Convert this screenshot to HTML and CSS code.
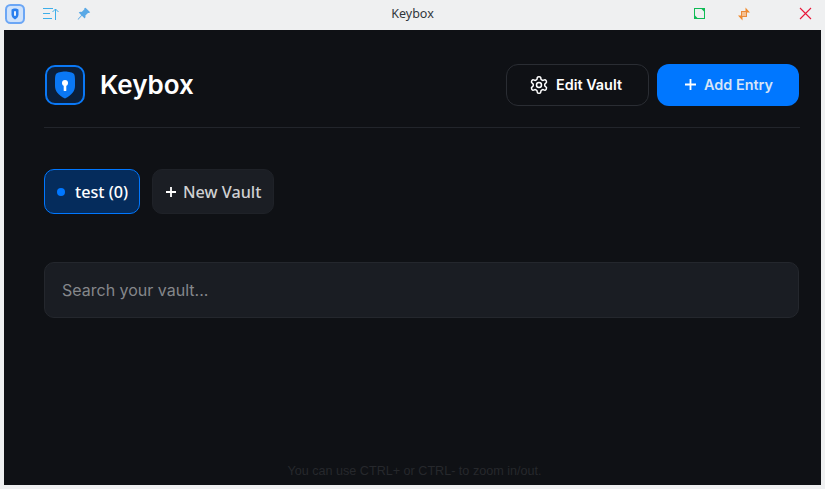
FILE: index.html
```html
<!DOCTYPE html>
<html lang="en">
<head>
  <meta charset="UTF-8">
  <title>Keybox</title>
  <link rel="stylesheet" href="styles.css">
</head>
<body>

  <!-- window title bar -->
  <div class="titlebar">
    <div class="tb-left">
      <svg class="tb-logo" width="20" height="20" viewBox="0 0 20 20">
        <rect x="1" y="1" width="18" height="18" rx="4.5" fill="#cfe2fb" stroke="#6ba6f5" stroke-width="2"/>
        <path d="M10 4.500c1.500 0 3.500.5 3.500 1.500v4.200c0 2.600-1.500 4.200-3.500 5.300-2-1.100-3.500-2.700-3.500-5.300V6c0-1 2-1.500 3.500-1.500z" fill="#2a7fee"/>
        <rect x="9" y="7" width="2" height="5" rx="1" fill="#e8f1fd"/>
      </svg>
      <svg class="tb-sort" width="16" height="14" viewBox="0 0 16 14" fill="none" stroke="#3daee9" stroke-width="1">
        <path d="M0 1.500h10M0 6.500h7M0 11.500h9M12.500 13V2M9.500 5l3-3 3 3"/>
      </svg>
      <svg class="tb-pin" width="14" height="14" viewBox="0 0 14 14">
        <path d="M8.500 0.800l4.700 4.500-1.200.8-1-.2-2.600 2.700c.3 1.200 0 2.200-.7 2.900L4.900 8.800 1.200 12.800.6 12.200l3.700-4-2.600-2.600c.8-.7 1.800-1 3-.7l2.700-2.600-.1-1z" fill="#5aa9e6"/>
      </svg>
    </div>
    <div class="tb-title">Keybox</div>
    <div class="tb-right">
      <svg class="tb-max" width="12" height="12" viewBox="0 0 12 12">
        <rect x="0.500" y="0.500" width="10" height="10" fill="none" stroke="#0fbb55" stroke-width="1"/>
        <path d="M1 10V7.500L3.500 10zM10 1v2.500L7.500 1z" fill="#0fbb55"/>
      </svg>
      <svg class="tb-min" width="14" height="14" viewBox="0 0 14 14">
        <path d="M8.500 0.500l4.500 5h-4.500zM5.500 13.500l-4.500-5h4.500z" fill="#f08a2c"/>
        <rect x="4.500" y="4.500" width="5" height="5" fill="#f6c08f" stroke="#e88a3c" stroke-width="1"/>
      </svg>
      <svg width="13" height="13" viewBox="0 0 13 13" stroke="#e8173a" stroke-width="1.100" fill="none">
        <path d="M1 1l11 11M12 1L1 12"/>
      </svg>
    </div>
  </div>

  <div class="app">
    <header class="top">
      <div class="brand">
        <div class="logo">
          <svg width="20" height="28" viewBox="0 0 20 28">
            <path d="M10 0.500c3.500 0 8 1 9 2.500.7 1 1 3 1 6v6c0 5-3 9-10 12.500C3 24 0 20 0 15V9c0-3 .3-5 1-6 1-1.500 5.500-2.500 9-2.500z" fill="#0a78f5"/>
            <circle cx="10" cy="12" r="3" fill="#fff"/>
            <rect x="8.700" y="12" width="2.600" height="8" rx="0.600" fill="#fff"/>
          </svg>
        </div>
        <h1>Keybox</h1>
      </div>
      <div class="actions">
        <button class="btn btn-dark">
          <svg width="20" height="20" viewBox="0 0 24 24" fill="none" stroke="#fff" stroke-width="1.800" stroke-linecap="round" stroke-linejoin="round">
            <circle cx="12" cy="12" r="3"/>
            <path d="M12.220 2h-.440a2 2 0 0 0-2 2v.180a2 2 0 0 1-1 1.730l-.430.250a2 2 0 0 1-2 0l-.150-.080a2 2 0 0 0-2.730.730l-.220.380a2 2 0 0 0 .730 2.730l.150.100a2 2 0 0 1 1 1.720v.510a2 2 0 0 1-1 1.740l-.150.090a2 2 0 0 0-.730 2.730l.220.380a2 2 0 0 0 2.730.730l.150-.080a2 2 0 0 1 2 0l.430.250a2 2 0 0 1 1 1.730V20a2 2 0 0 0 2 2h.440a2 2 0 0 0 2-2v-.180a2 2 0 0 1 1-1.730l.430-.250a2 2 0 0 1 2 0l.150.080a2 2 0 0 0 2.730-.730l.220-.390a2 2 0 0 0-.730-2.730l-.150-.080a2 2 0 0 1-1-1.740v-.500a2 2 0 0 1 1-1.740l.150-.090a2 2 0 0 0 .730-2.730l-.220-.380a2 2 0 0 0-2.730-.730l-.150.080a2 2 0 0 1-2 0l-.430-.250a2 2 0 0 1-1-1.730V4a2 2 0 0 0-2-2z"/>
          </svg>
          Edit Vault
        </button>
        <button class="btn btn-blue">
          <svg width="11" height="11" viewBox="0 0 11 11" stroke="#fff" stroke-width="1.800">
            <path d="M5.500 0v11M0 5.500h11"/>
          </svg>
          <span class="btn-blue-text">Add Entry</span>
        </button>
      </div>
    </header>

    <div class="vaults">
      <button class="pill pill-active"><span class="dot"></span>test (0)</button>
      <button class="pill pill-new">
        <svg width="10" height="10" viewBox="0 0 10 10" stroke="#fff" stroke-width="1.800">
          <path d="M5 0v10M0 5h10"/>
        </svg>
        <span class="pill-new-text">New Vault</span>
      </button>
    </div>

    <input class="search" type="text" placeholder="Search your vault...">

    <p class="hint">You can use CTRL+ or CTRL- to zoom in/out.</p>
  </div>

</body>
</html>
```

FILE: styles.css
```css
* {
  box-sizing: border-box;
}

body {
  margin: 0;
  height: 489px;
  overflow: hidden;
  background: #eff0f1;
  font-family: Inter, sans-serif;
}

.titlebar {
  display: grid;
  grid-template-columns: 1fr auto 1fr;
  align-items: center;
  height: 30px;
  padding-bottom: 3px;
}

.tb-left {
  display: flex;
  align-items: center;
  padding-left: 5px;
}

.tb-sort {
  margin-left: 18px;
}

.tb-pin {
  margin-left: 18px;
}

.tb-title {
  font-family: "Noto Sans", sans-serif;
  font-size: 12.5px;
  color: #31363b;
}

.tb-right {
  display: flex;
  justify-content: flex-end;
  align-items: center;
  padding-right: 13px;
}

.tb-max {
  margin-right: 31px;
}

.tb-min {
  margin-right: 48px;
}

.app {
  display: flex;
  flex-direction: column;
  height: 455px;
  margin: 0 4px;
  padding: 34px 21px 0 40px;
  background: #0f1115;
}

.top {
  display: flex;
  justify-content: space-between;
  align-items: center;
  height: 64px;
  padding-bottom: 22px;
  border-bottom: 1px solid #22252b;
}

.brand {
  display: flex;
  align-items: center;
  gap: 15px;
  padding-left: 1px;
}

.logo {
  display: flex;
  align-items: center;
  justify-content: center;
  width: 40px;
  height: 40px;
  border: 2px solid #0a78f5;
  border-radius: 10px;
  background: #0b1f3a;
}

h1 {
  margin: 0;
  font-size: 26px;
  font-weight: 600;
  color: #fff;
}

.actions {
  display: flex;
  gap: 8px;
  padding-right: 1px;
}

.btn {
  display: flex;
  align-items: center;
  justify-content: center;
  height: 42px;
  border-radius: 12px;
  font-family: Inter, sans-serif;
  font-size: 14.4px;
  font-weight: 600;
  color: #fff;
}

.btn-dark {
  width: 143px;
  gap: 7px;
  padding: 0 4px 0 0;
  border: 1px solid #2a2d33;
  background: #0f1115;
}

.btn-blue {
  width: 142px;
  gap: 8px;
  padding: 0 0 0 2px;
  border: none;
  background: #0077ff;
}

.btn-blue-text {
  color: #d6e4f7;
}

.vaults {
  display: flex;
  gap: 12px;
  margin-top: 41px;
}

.pill {
  display: flex;
  align-items: center;
  height: 45px;
  border-radius: 10px;
  font-family: "Noto Sans", sans-serif;
  font-size: 16.2px;
  font-weight: 500;
}

.pill-active {
  width: 96px;
  gap: 10px;
  padding: 0 0 0 12px;
  border: 1px solid #0077ff;
  background: #052c5c;
  color: #fff;
}

.dot {
  width: 8px;
  height: 8px;
  border-radius: 50%;
  background: #0077ff;
}

.pill-new {
  width: 122px;
  gap: 7px;
  padding: 0 0 0 13px;
  border: 1px solid #1f2228;
  background: #1b1e24;
}

.pill-new-text {
  color: #cfd0d2;
}

.search {
  display: block;
  width: 755px;
  height: 56px;
  margin-top: 48px;
  padding: 0 17px;
  border: 1px solid #24272d;
  border-radius: 10px;
  background: #1a1d23;
  font-family: Inter, sans-serif;
  font-size: 16px;
  color: #fff;
}

.search::placeholder {
  color: #85878b;
  opacity: 1;
}

.hint {
  margin: auto 0 7px;
  padding-right: 15px;
  text-align: center;
  font-family: "Liberation Sans", sans-serif;
  font-size: 12.6px;
  color: #26282c;
}
```
